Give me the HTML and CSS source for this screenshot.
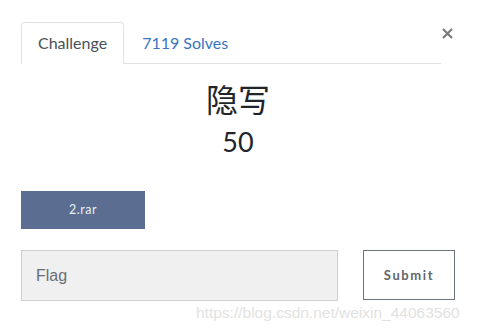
FILE: index.html
```html
<!DOCTYPE html>
<html>
<head>
<meta charset="utf-8">
<link rel="stylesheet" href="styles.css">
</head>
<body>
<div class="modal">
  <div class="top">
    <ul class="tabs">
      <li class="tab active">Challenge</li>
      <li class="tab link">7119 Solves</li>
    </ul>
    <span class="close"><svg width="11" height="11" viewBox="0 0 11 11"><path d="M1 1L10 10M10 1L1 10" stroke="#7b7b7b" stroke-width="2.2" fill="none"/></svg></span>
  </div>
  <h2 class="title">隐写</h2>
  <div class="points">50</div>
  <div class="files"><span class="file">2.rar</span></div>
  <form class="submit-row">
    <input class="flag" type="text" placeholder="Flag">
    <button class="submit" type="button">Submit</button>
  </form>
  <div class="watermark">https://blog.csdn.net/weixin_44063560</div>
</div>
</body>
</html>
```
FILE: styles.css
```css
html, body { margin: 0; padding: 0; background: #fff; }
.modal {
  position: relative;
  width: 477px;
  height: 332px;
  box-sizing: border-box;
  padding: 22px 22px 0 21px;
  font-family: Lato, "Noto Sans CJK SC", sans-serif;
  color: #212529;
}
.top { display: flex; align-items: flex-start; }
.tabs {
  list-style: none;
  margin: 0;
  padding: 0;
  display: flex;
  width: 420px;
  border-bottom: 1px solid #dee2e6;
  height: 41px;
}
.tab {
  font-size: 16px;
  padding: 0 16px 0 16px;
  line-height: 41px;
  height: 42px;
  box-sizing: border-box;
}
.tab.active {
  border: 1px solid #dee2e6;
  border-bottom-color: #fff;
  border-radius: 4px 4px 0 0;
  color: #495057;
  background: #fff;
  line-height: 40px;
}
.tab.link { color: #3b73c2; padding-left: 18px; }
.close {
  margin-left: 1px;
  margin-top: 6px;
  display: flex;
}
.title {
  margin: 14px 0 0;
  text-align: center;
  font-weight: normal;
  font-size: 32px;
  line-height: 40px;
  font-family: "Noto Sans CJK SC", sans-serif;
}
.points {
  text-align: center;
  font-size: 27px;
  line-height: 36px;
  margin-top: 6px;
}
.files { margin-top: 31px; display: flex; }
.file {
  display: inline-block;
  width: 124px;
  height: 38px;
  line-height: 38px;
  text-align: center;
  background: #5b6d91;
  color: #e9edf5;
  font-size: 12.5px;
  letter-spacing: 0.5px;
}
.submit-row { display: flex; margin: 21px 0 0; gap: 25px; }
.flag {
  width: 317px;
  height: 51px;
  box-sizing: border-box;
  margin: 0;
  border: 1px solid #ced0d4;
  background: #f0f0f0;
  padding: 0 14px;
  font-family: "Liberation Sans", sans-serif;
  font-size: 16px;
  color: #555;
  border-radius: 0;
  outline: none;
}
.flag::placeholder { color: #6a6e73; }
.submit {
  width: 92px;
  height: 50px;
  box-sizing: border-box;
  margin: 0;
  background: #fff;
  border: 1px solid #6c757d;
  border-radius: 0;
  color: #5f666d;
  font-family: Lato, sans-serif;
  font-weight: bold;
  font-size: 13px;
  letter-spacing: 1.6px;
}
.watermark {
  position: absolute;
  left: 196px;
  top: 304px;
  font-family: "Liberation Sans", sans-serif;
  font-size: 15.5px;
  color: #e2e2e2;
  white-space: nowrap;
}
```
